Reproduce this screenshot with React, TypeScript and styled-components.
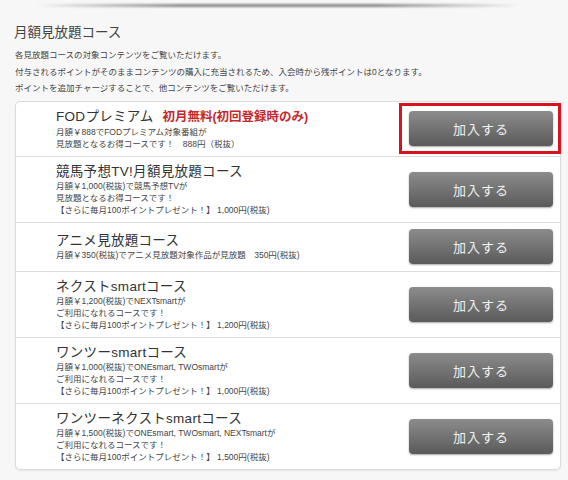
import React from 'react';
import styled, { createGlobalStyle } from 'styled-components';

const GlobalStyle = createGlobalStyle`
  body {
    margin: 0;
    background: #f7f7f7;
    font-family: "Liberation Sans", "Noto Sans CJK JP", sans-serif;
    color: #333;
  }
`;

const Page = styled.div`
  width: 568px;
  height: 480px;
  overflow: hidden;
  box-sizing: border-box;
  padding: 0 7px 0 15px;
`;

const TopShade = styled.div`
  height: 3px;
  margin: 4px 40px 0 20px;
  background: linear-gradient(to right, rgba(0,0,0,0), rgba(0,0,0,0.45) 30%, rgba(0,0,0,0.45) 70%, rgba(0,0,0,0));
  filter: blur(1px);
`;

const Heading = styled.h1`
  margin: 16px 0 0 -1px;
  font-size: 13.5px;
  font-weight: normal;
  line-height: 20px;
  color: #444;
`;

const Intro = styled.div`
  margin-top: 4px;
  font-size: 8.5px;
  line-height: 16.5px;
  color: #444;
`;

const Card = styled.div`
  margin-top: 4px;
  background: #fff;
  border: 1px solid #dcdcdc;
  border-radius: 5px;
  box-shadow: 0 1px 2px rgba(0, 0, 0, 0.08);
`;

const Row = styled.div`
  display: flex;
  align-items: center;
  justify-content: space-between;
  box-sizing: border-box;
  min-height: 49px;
  padding: 6px 7px 6px 40px;
  & + & {
    border-top: 1px solid #ddd;
  }
`;

const Info = styled.div`
  display: flex;
  flex-direction: column;
`;

const Title = styled.div`
  font-size: 13.5px;
  line-height: 17px;
  color: #333;
  letter-spacing: 0.3px;
`;

const Free = styled.span`
  margin-left: 9px;
  font-size: 12.5px;
  letter-spacing: 0;
  color: #c32a2f;
  font-weight: bold;
`;

const Desc = styled.div`
  font-size: 8.5px;
  line-height: 12px;
  color: #444;
`;

const ButtonWrap = styled.div`
  position: relative;
  flex-shrink: 0;
`;

const Highlight = styled.div`
  position: absolute;
  left: -10px;
  right: -8px;
  top: -8px;
  bottom: -8px;
  border: 3px solid #d7141b;
  pointer-events: none;
`;

const JoinButton = styled.button`
  display: block;
  width: 144px;
  height: 35px;
  border: none;
  border-radius: 4px;
  background: linear-gradient(to bottom, #8c8c8c, #5a5a5a);
  box-shadow: 0 1px 2px rgba(0, 0, 0, 0.35);
  color: #f2f2f2;
  font-family: "Noto Sans CJK JP", sans-serif;
  font-size: 13px;
  letter-spacing: 1px;
  cursor: pointer;
`;

type Course = {
  title: string;
  free?: string;
  lines: string[];
  highlight?: boolean;
};

const courses: Course[] = [
  {
    title: 'FODプレミアム',
    free: '初月無料(初回登録時のみ)',
    lines: ['月額￥888でFODプレミアム対象番組が', '見放題となるお得コースです！　888円（税抜）'],
    highlight: true,
  },
  {
    title: '競馬予想TV!月額見放題コース',
    lines: [
      '月額￥1,000(税抜)で競馬予想TVが',
      '見放題となるお得コースです！',
      '【さらに毎月100ポイントプレゼント！】 1,000円(税抜)',
    ],
  },
  {
    title: 'アニメ見放題コース',
    lines: ['月額￥350(税抜)でアニメ見放題対象作品が見放題　350円(税抜)'],
  },
  {
    title: 'ネクストsmartコース',
    lines: [
      '月額￥1,200(税抜)でNEXTsmartが',
      'ご利用になれるコースです！',
      '【さらに毎月100ポイントプレゼント！】 1,200円(税抜)',
    ],
  },
  {
    title: 'ワンツーsmartコース',
    lines: [
      '月額￥1,000(税抜)でONEsmart, TWOsmartが',
      'ご利用になれるコースです！',
      '【さらに毎月100ポイントプレゼント！】 1,000円(税抜)',
    ],
  },
  {
    title: 'ワンツーネクストsmartコース',
    lines: [
      '月額￥1,500(税抜)でONEsmart, TWOsmart, NEXTsmartが',
      'ご利用になれるコースです！',
      '【さらに毎月100ポイントプレゼント！】 1,500円(税抜)',
    ],
  },
];

export default function App() {
  return (
    <Page>
      <GlobalStyle />
      <TopShade />
      <Heading>月額見放題コース</Heading>
      <Intro>
        <div>各見放題コースの対象コンテンツをご覧いただけます。</div>
        <div>付与されるポイントがそのままコンテンツの購入に充当されるため、入会時から残ポイントは0となります。</div>
        <div>ポイントを追加チャージすることで、他コンテンツをご覧いただけます。</div>
      </Intro>
      <Card>
        {courses.map((c) => (
          <Row key={c.title}>
            <Info>
              <Title>
                {c.title}
                {c.free && <Free>{c.free}</Free>}
              </Title>
              {c.lines.map((l) => (
                <Desc key={l}>{l}</Desc>
              ))}
            </Info>
            <ButtonWrap>
              {c.highlight && <Highlight />}
              <JoinButton>加入する</JoinButton>
            </ButtonWrap>
          </Row>
        ))}
      </Card>
    </Page>
  );
}
